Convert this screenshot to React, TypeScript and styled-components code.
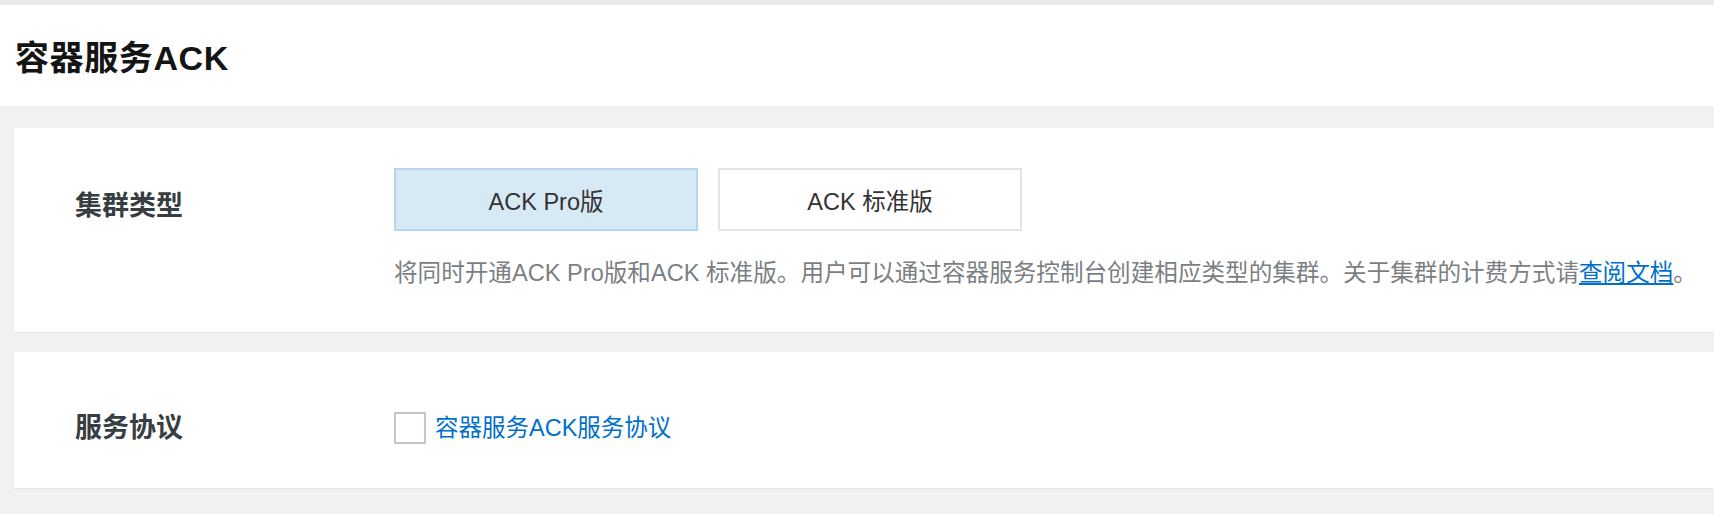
import React, { ReactElement, useState } from "react";
import styled, { createGlobalStyle } from "styled-components";

const FONT = `"Liberation Sans", "Noto Sans CJK SC", sans-serif`;

const clusterTypes = ["ACK Pro版", "ACK 标准版"];

const GlobalStyle = createGlobalStyle`
  html, body {
    margin: 0;
    padding: 0;
    background: #f0f1f3;
    font-family: ${FONT};
  }
`;

export default function App(): ReactElement {
  const [selected, setSelected] = useState(0);
  const [agreed, setAgreed] = useState(false);

  return (
    <Page>
      <GlobalStyle />
      <Header>
        <Title>容器服务ACK</Title>
      </Header>
      <Body>
        <Card>
          <FormRow>
            <Label>集群类型</Label>
            <Field>
              <ButtonGroup>
                {clusterTypes.map((type, i) => (
                  <TypeButton
                    key={type}
                    $active={i === selected}
                    onClick={() => setSelected(i)}
                  >
                    {type}
                  </TypeButton>
                ))}
              </ButtonGroup>
              <Description>
                将同时开通ACK Pro版和ACK 标准版。用户可以通过容器服务控制台创建相应类型的集群。关于集群的计费方式请
                <DocLink href="#">查阅文档</DocLink>。
              </Description>
            </Field>
          </FormRow>
        </Card>
        <Card $compact>
          <FormRow>
            <Label $center>服务协议</Label>
            <AgreementRow>
              <Checkbox
                $checked={agreed}
                onClick={() => setAgreed(!agreed)}
              />
              <AgreementLink href="#">容器服务ACK服务协议</AgreementLink>
            </AgreementRow>
          </FormRow>
        </Card>
      </Body>
    </Page>
  );
}

const Page = styled.div`
  min-height: 514px;
  background: #f0f1f3;
`;

const Header = styled.div`
  border-top: 5px solid #e9eaec;
  background: #fff;
  height: 106px;
  box-sizing: border-box;
  display: flex;
  align-items: center;
  padding: 4px 0 0 15px;
`;

const Title = styled.h1`
  margin: 0;
  font-size: 34px;
  font-weight: 700;
  letter-spacing: 0.6px;
  color: #141414;
  line-height: 1;
`;

const Body = styled.div`
  display: flex;
  flex-direction: column;
  gap: 20px;
  padding: 22px 0 28px 14px;
`;

const Card = styled.div<{ $compact?: boolean }>`
  background: #fff;
  box-shadow: 0 1px 2px rgba(0, 0, 0, 0.05);
  padding: ${(p) => (p.$compact ? "60px 0 44px 61px" : "40px 0 41px 61px")};
`;

const FormRow = styled.div`
  display: grid;
  grid-template-columns: 319px 1fr;
  align-items: start;
`;

const Label = styled.div<{ $center?: boolean }>`
  font-size: 27px;
  font-weight: 700;
  color: #373d41;
  line-height: 32px;
  padding-top: ${(p) => (p.$center ? "0" : "22px")};
`;

const Field = styled.div`
  display: flex;
  flex-direction: column;
`;

const ButtonGroup = styled.div`
  display: flex;
  gap: 20px;
`;

const TypeButton = styled.button<{ $active: boolean }>`
  width: 304px;
  height: 63px;
  box-sizing: border-box;
  border: 2px solid ${(p) => (p.$active ? "#b4d5ef" : "#e3e4e6")};
  background: ${(p) => (p.$active ? "#d8e9f6" : "#fff")};
  color: #333;
  font-family: ${FONT};
  font-size: 23.5px;
  cursor: pointer;
  padding: 0;
`;

const Description = styled.p`
  margin: 25px 0 0;
  font-size: 23.6px;
  line-height: 35px;
  color: #7b7f83;
  white-space: nowrap;
`;

const DocLink = styled.a`
  color: #0070cc;
  text-decoration: underline;
`;

const AgreementRow = styled.div`
  display: flex;
  align-items: center;
  gap: 9px;
`;

const Checkbox = styled.span<{ $checked: boolean }>`
  width: 32px;
  height: 32px;
  box-sizing: border-box;
  border: 2px solid #c4c6cf;
  background: ${(p) => (p.$checked ? "#0070cc" : "#fff")};
  cursor: pointer;
`;

const AgreementLink = styled.a`
  font-size: 23.5px;
  line-height: 32px;
  color: #0070cc;
  text-decoration: none;
`;
